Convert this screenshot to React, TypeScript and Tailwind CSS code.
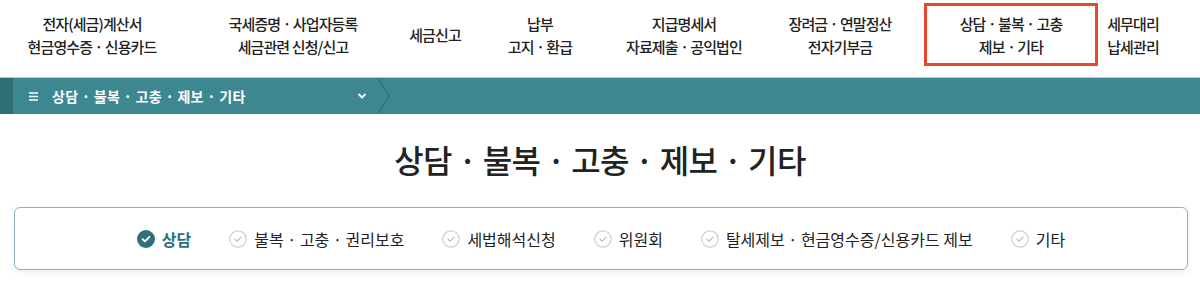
import { ReactNode } from "react";

const navItems: { lines: string[]; width: string; active?: boolean }[] = [
  { lines: ["전자(세금)계산서", "현금영수증 · 신용카드"], width: "w-[184px]" },
  { lines: ["국세증명 · 사업자등록", "세금관련 신청/신고"], width: "w-[218px]" },
  { lines: ["세금신고"], width: "w-[66px]" },
  { lines: ["납부", "고지 · 환급"], width: "w-[144px]" },
  { lines: ["지급명세서", "자료제출 · 공익법인"], width: "w-[144px]" },
  { lines: ["장려금 · 연말정산", "전자기부금"], width: "w-[168px]" },
  { lines: ["상담 · 불복 · 고충", "제보 · 기타"], width: "w-[174px]", active: true },
  { lines: ["세무대리", "납세관리"], width: "w-[70px]" },
];

const tabs = [
  "상담",
  "불복 · 고충 · 권리보호",
  "세법해석신청",
  "위원회",
  "탈세제보 · 현금영수증/신용카드 제보",
  "기타",
];

const CheckIcon = ({ active }: { active?: boolean }) =>
  active ? (
    <svg width="18" height="18" viewBox="0 0 18 18">
      <circle cx="9" cy="9" r="9" fill="#2f6f7e" />
      <path d="M5.6 9.2l2.3 2.2 4.5-4.5" fill="none" stroke="#fff" strokeWidth="1.9" strokeLinecap="round" strokeLinejoin="round" />
    </svg>
  ) : (
    <svg width="18" height="18" viewBox="0 0 18 18">
      <circle cx="9" cy="9" r="8.2" fill="none" stroke="#cfcfcf" strokeWidth="1.2" />
      <path d="M6 9.2l2.1 2 4-4" fill="none" stroke="#bdbdbd" strokeWidth="1.2" strokeLinecap="round" strokeLinejoin="round" />
    </svg>
  );

const NavItem = ({ lines, width, active }: { lines: string[]; width: string; active?: boolean }) => (
  <div
    className={
      "h-[63px] flex flex-col items-center justify-center whitespace-nowrap text-[15px] font-medium leading-[23px] tracking-[-0.06em] text-[#222] " +
      width +
      (active ? " border-[3px] border-[#e8472c]" : "")
    }
  >
    {lines.map((l, i) => (
      <span key={i}>{l}</span>
    ))}
  </div>
);

const Bar = ({ children }: { children?: ReactNode }) => (
  <div className="mt-[11px] border-t border-[#a9cdd2] bg-[#3d8791] h-[37px] flex">{children}</div>
);

export default function App() {
  return (
    <div className="w-[1200px] h-[283px] bg-white overflow-hidden font-['Noto_Sans_CJK_KR','Noto_Sans',sans-serif]">
      <div className="flex pt-[3px]">
        {navItems.map((item, i) => (
          <NavItem key={i} {...item} />
        ))}
      </div>

      <Bar>
        <div className="w-[13px] bg-[#2f6e77]" />
        <div className="flex items-center w-[364px] pl-[16px] text-white">
          <svg width="9" height="9" viewBox="0 0 9 9" className="mr-[14px]">
            <path d="M0 1h9M0 4.5h9M0 8h9" stroke="#fff" strokeWidth="1.4" />
          </svg>
          <span className="text-[14px] font-bold tracking-[0.02em]">상담 · 불복 · 고충 · 제보 · 기타</span>
          <svg width="10" height="6" viewBox="0 0 10 6" className="ml-auto mr-[10px]">
            <path d="M1.5 1l3.5 3.5L8.5 1" fill="none" stroke="#fff" strokeWidth="1.8" />
          </svg>
        </div>
        <svg width="14" height="36" viewBox="0 0 14 36">
          <path d="M1 0l11 18L1 36" fill="none" stroke="#2a6972" strokeWidth="1" />
        </svg>
      </Bar>

      <h1 className="mt-[25px] h-[40px] flex items-center justify-center text-[32px] font-medium tracking-[-0.02em] text-[#222]">
        상담 · 불복 · 고충 · 제보 · 기타
      </h1>

      <div className="mt-[28px] ml-[14px] mr-[12px] h-[63px] rounded-[6px] border border-[#8fb1bc] shadow-[0_2px_6px_rgba(0,0,0,0.08)] flex items-center justify-center gap-[38px]">
        {tabs.map((t, i) => (
          <div key={t} className="flex items-center gap-[7px]">
            <CheckIcon active={i === 0} />
            <span
              className={
                "text-[16px] whitespace-nowrap " +
                (i === 0 ? "text-[#2d6f7e] font-bold" : "text-[#222]")
              }
            >
              {t}
            </span>
          </div>
        ))}
      </div>
    </div>
  );
}
